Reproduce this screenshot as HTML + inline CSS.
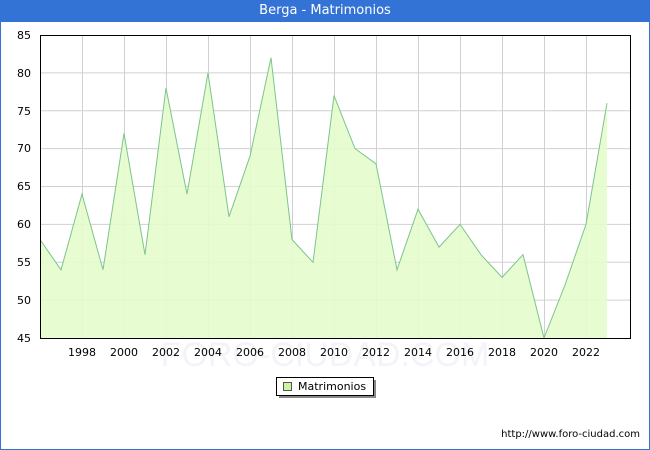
<!DOCTYPE html>
<html><head><style>
body{margin:0;width:650px;height:450px;overflow:hidden;font-family:"DejaVu Sans","Liberation Sans",sans-serif;}
.wrap{position:absolute;left:0;top:0;width:648px;height:448px;border:1px solid #3473d6;background:#fff;}
.title{position:absolute;left:0;top:0;width:650px;height:22px;background:#3473d6;color:#fff;font-size:13px;line-height:22px;text-align:center;}
</style></head><body>
<div class="wrap"></div>
<div class="title">Berga - Matrimonios</div>
<svg width="650" height="450" style="position:absolute;left:0;top:0" font-family="DejaVu Sans, Liberation Sans, sans-serif" font-size="11">
<text x="325" y="366" text-anchor="middle" font-size="34" fill="#f2f4fa" font-family="Liberation Sans, sans-serif">FORO-CIUDAD.COM</text>
<g stroke="#d0d0d0" stroke-width="1">
<line x1="40" y1="72.9" x2="630" y2="72.9"/><line x1="40" y1="110.8" x2="630" y2="110.8"/><line x1="40" y1="148.6" x2="630" y2="148.6"/><line x1="40" y1="186.5" x2="630" y2="186.5"/><line x1="40" y1="224.4" x2="630" y2="224.4"/><line x1="40" y1="262.3" x2="630" y2="262.3"/><line x1="40" y1="300.1" x2="630" y2="300.1"/>
<line x1="82.5" y1="35" x2="82.5" y2="338"/><line x1="124.5" y1="35" x2="124.5" y2="338"/><line x1="166.5" y1="35" x2="166.5" y2="338"/><line x1="208.5" y1="35" x2="208.5" y2="338"/><line x1="250.5" y1="35" x2="250.5" y2="338"/><line x1="292.5" y1="35" x2="292.5" y2="338"/><line x1="334.5" y1="35" x2="334.5" y2="338"/><line x1="376.5" y1="35" x2="376.5" y2="338"/><line x1="418.5" y1="35" x2="418.5" y2="338"/><line x1="460.5" y1="35" x2="460.5" y2="338"/><line x1="502.5" y1="35" x2="502.5" y2="338"/><line x1="544.5" y1="35" x2="544.5" y2="338"/><line x1="586.5" y1="35" x2="586.5" y2="338"/>
</g>
<polygon fill="#e4fccc" fill-opacity="0.9" stroke="none" points="40,338 40,239.5 61,269.8 82,194.1 103,269.8 124,133.5 145,254.7 166,88 187,194.1 208,72.9 229,216.8 250,156.2 271,57.7 292,239.5 313,262.3 334,95.6 355,148.6 376,163.8 397,269.8 418,209.2 439,247.1 460,224.4 481,254.7 502,277.4 523,254.7 544,338 565,285 586,224.4 607,103.2 607,338"/>
<polyline fill="none" stroke="#7cc48c" stroke-width="1" points="40,239.5 61,269.8 82,194.1 103,269.8 124,133.5 145,254.7 166,88 187,194.1 208,72.9 229,216.8 250,156.2 271,57.7 292,239.5 313,262.3 334,95.6 355,148.6 376,163.8 397,269.8 418,209.2 439,247.1 460,224.4 481,254.7 502,277.4 523,254.7 544,338 565,285 586,224.4 607,103.2"/>
<rect x="40.5" y="35.5" width="590" height="303" fill="none" stroke="#000"/>
<g text-anchor="end" fill="#000">
<text x="31" y="39">85</text><text x="31" y="77">80</text><text x="31" y="115">75</text><text x="31" y="152">70</text><text x="31" y="190">65</text><text x="31" y="228">60</text><text x="31" y="266">55</text><text x="31" y="304">50</text><text x="31" y="342">45</text>
</g>
<g text-anchor="middle" fill="#000">
<text x="82" y="356">1998</text><text x="124" y="356">2000</text><text x="166" y="356">2002</text><text x="208" y="356">2004</text><text x="250" y="356">2006</text><text x="292" y="356">2008</text><text x="334" y="356">2010</text><text x="376" y="356">2012</text><text x="418" y="356">2014</text><text x="460" y="356">2016</text><text x="502" y="356">2018</text><text x="544" y="356">2020</text><text x="586" y="356">2022</text>
</g>
<rect x="279" y="380" width="97" height="18" fill="#888"/>
<rect x="276.5" y="377.5" width="97" height="18" fill="#fff" stroke="#000"/>
<rect x="283.5" y="382.5" width="8" height="8" fill="#ccf5a0" stroke="#555"/>
<text x="298" y="390" fill="#000">Matrimonios</text>
<text x="640" y="437" text-anchor="end" font-size="10" fill="#000">http://www.foro-ciudad.com</text>
</svg>
</body></html>
